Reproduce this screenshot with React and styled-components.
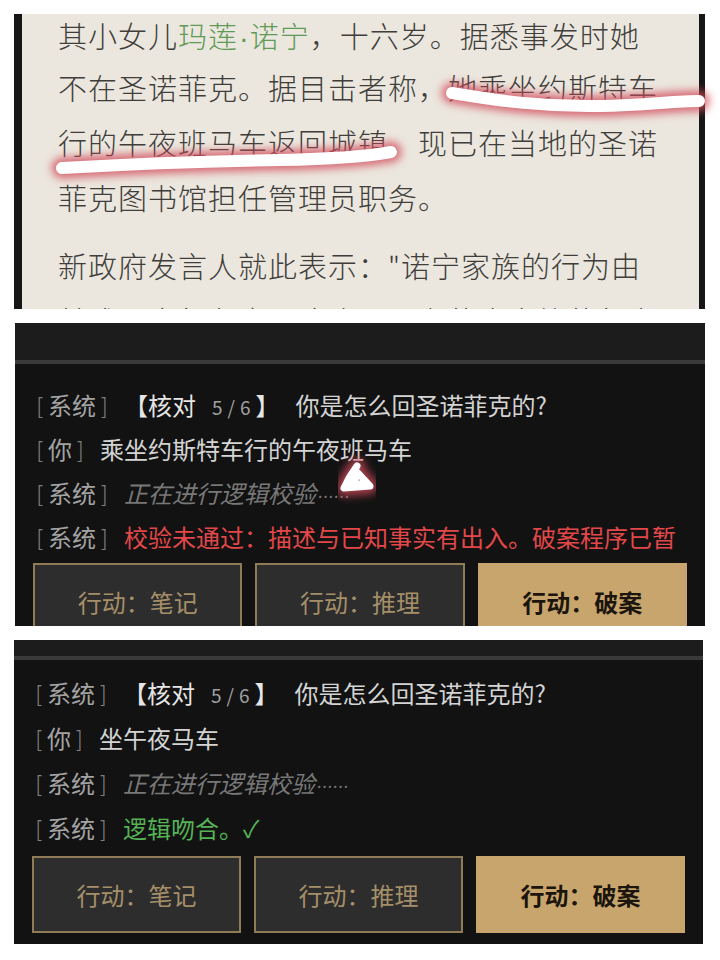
import React from 'react';
import styled, { createGlobalStyle } from 'styled-components';

const GlobalStyle = createGlobalStyle`
  html, body {
    margin: 0;
    padding: 0;
    background: #ffffff;
  }
  body {
    font-family: "Noto Sans CJK SC", "Noto Sans", sans-serif;
  }
`;

const Page = styled.div`
  position: relative;
  width: 720px;
  height: 960px;
  box-sizing: border-box;
  padding-top: 14px;
  display: flex;
  flex-direction: column;
  gap: 14px;
  overflow: hidden;
`;

// ---- reading panel ----
const Paper = styled.div`
  margin-left: 14px;
  width: 691px;
  height: 295px;
  flex-shrink: 0;
  box-sizing: border-box;
  border-left: 8px solid #161616;
  border-right: 6px solid #161616;
  background: #ebe7de;
  overflow: hidden;
`;

const Article = styled.div`
  padding-left: 36px;
  font-size: 29px;
  font-weight: 300;
  letter-spacing: 1px;
  color: #3f3e3b;
  white-space: nowrap;
`;

const Para = styled.div`
  margin-bottom: 13px;
`;

// the crop starts just above the first line
const Line = styled.div`
  height: ${p => (p.$first ? 46 : 55)}px;
  line-height: ${p => (p.$first ? 42 : 55)}px;
`;

const Name = styled.span`
  color: #5f9a56;
`;

const Dot = styled.span`
  font-family: "Liberation Sans", sans-serif;
  letter-spacing: 0;
  margin: 0 1px;
`;

// ---- console panels ----
const Console = styled.div`
  margin-left: ${p => p.$left}px;
  width: ${p => p.$width}px;
  height: ${p => p.$height}px;
  flex-shrink: 0;
  background: #121212;
  overflow: hidden;
  display: flex;
  flex-direction: column;
`;

const TopBar = styled.div`
  height: ${p => p.$h}px;
  flex-shrink: 0;
  background: #1c1c1c;
  border-bottom: 4px solid #3a3a3a;
`;

const Body = styled.div`
  padding: ${p => p.$top}px 18px 10px 18px;
  display: flex;
  flex-direction: column;
`;

const Log = styled.div`
  display: flex;
  flex-direction: column;
  padding-left: 3px;
  margin-bottom: ${p => p.$gap}px;
`;

const Row = styled.div`
  height: ${p => p.$h}px;
  line-height: ${p => p.$h}px;
  font-size: 24px;
  color: #d4d4d4;
  white-space: nowrap;
`;

const Tag = styled.span`
  color: #a3a3a3;
  margin-right: 13px;
`;

const Bracket = styled.span`
  color: #808080;
  font-family: "DejaVu Sans", sans-serif;
  font-weight: 200;
  font-size: 23px;
  margin: 0 3px;
  &:first-child {
    margin-left: 0;
  }
`;

const Check = styled.span`
  color: #e6e6e6;
`;

const Count = styled.span`
  font-size: 19px;
  color: #a0a0a0;
  letter-spacing: 5px;
  margin-left: 16px;
`;

const Question = styled.span`
  margin-left: 16px;
`;

const Pending = styled.span`
  color: #787878;
  font-style: italic;
`;

const Dots = styled.span`
  font-size: 16px;
`;

const Fail = styled.span`
  color: #e2484a;
`;

const Pass = styled.span`
  color: #55b255;
`;

const Actions = styled.div`
  display: grid;
  grid-template-columns: repeat(3, 1fr);
  gap: 13px;
`;

const Btn = styled.div`
  height: 77px;
  box-sizing: border-box;
  display: flex;
  align-items: center;
  justify-content: center;
  font-size: 24px;
  background: ${p => (p.$primary ? '#c8a56c' : '#2d2d2d')};
  border: 2px solid ${p => (p.$primary ? '#c8a56c' : '#8f7b55')};
  color: ${p => (p.$primary ? '#1b150d' : '#a58f69')};
  font-weight: ${p => (p.$primary ? 700 : 400)};
`;

// hand-drawn marks on top of the screenshots
const Marks = styled.svg`
  position: absolute;
  left: 0;
  top: 0;
  pointer-events: none;
`;

const Label = ({ children }) => (
  <Tag>
    <Bracket>[</Bracket>
    {children}
    <Bracket>]</Bracket>
  </Tag>
);

const ActionBar = () => (
  <Actions>
    <Btn>行动：笔记</Btn>
    <Btn>行动：推理</Btn>
    <Btn $primary>行动：破案</Btn>
  </Actions>
);

const CheckRow = ({ h }) => (
  <Row $h={h}>
    <Label>系统</Label>
    <Check>【核对<Count>5/6</Count>】</Check>
    <Question>你是怎么回圣诺菲克的?</Question>
  </Row>
);

const strokes = [
  { d: 'M452,93 C500,101 545,107 600,106 C645,105 675,101 699,101', w: 12 },
  { d: 'M62,168 C130,164 210,161 280,160 C330,159 370,156 391,152', w: 12 },
  { d: 'M357,466 L349,478 L344,488 L370,486 L358,473 L353,484 L362,484', w: 7 },
];

const App = () => {
  return (
    <>
      <GlobalStyle />
      <Page>
        <Paper>
          <Article>
            <Para>
              <Line $first>
                其小女儿<Name>玛莲<Dot>·</Dot>诺宁</Name>，十六岁。据悉事发时她
              </Line>
              <Line>不在圣诺菲克。据目击者称，她乘坐约斯特车</Line>
              <Line>行的午夜班马车返回城镇，现已在当地的圣诺</Line>
              <Line>菲克图书馆担任管理员职务。</Line>
            </Para>
            <Para>
              <Line>新政府发言人就此表示："诺宁家族的行为由</Line>
              <Line>其成员自行负责，这也与旧有的大家族的行为</Line>
            </Para>
          </Article>
        </Paper>

        <Console $left={15} $width={690} $height={303}>
          <TopBar $h={37} />
          <Body $top={19}>
            <Log $gap={4}>
              <CheckRow h={44} />
              <Row $h={44}>
                <Label>你</Label>乘坐约斯特车行的午夜班马车
              </Row>
              <Row $h={44}>
                <Label>系统</Label>
                <Pending>
                  正在进行逻辑校验<Dots>……</Dots>
                </Pending>
              </Row>
              <Row $h={44}>
                <Label>系统</Label>
                <Fail>校验未通过：描述与已知事实有出入。破案程序已暂</Fail>
              </Row>
            </Log>
            <ActionBar />
          </Body>
        </Console>

        <Console $left={14} $width={689} $height={304}>
          <TopBar $h={16} />
          <Body $top={10}>
            <Log $gap={6}>
              <CheckRow h={45} />
              <Row $h={45}>
                <Label>你</Label>坐午夜马车
              </Row>
              <Row $h={45}>
                <Label>系统</Label>
                <Pending>
                  正在进行逻辑校验<Dots>……</Dots>
                </Pending>
              </Row>
              <Row $h={45}>
                <Label>系统</Label>
                <Pass>逻辑吻合。✓</Pass>
              </Row>
            </Log>
            <ActionBar />
          </Body>
        </Console>

        <Marks width="720" height="960" viewBox="0 0 720 960">
          <defs>
            <filter id="glow" x="-20%" y="-200%" width="140%" height="500%">
              <feGaussianBlur stdDeviation="4.5" />
            </filter>
          </defs>
          {strokes.map((s, i) => (
            <g key={i} fill="none" strokeLinecap="round" strokeLinejoin="round">
              <path d={s.d} stroke="#d24a5a" strokeOpacity="0.8" strokeWidth={s.w + 9} filter="url(#glow)" />
              <path d={s.d} stroke="#ffffff" strokeWidth={s.w} />
            </g>
          ))}
        </Marks>
      </Page>
    </>
  );
};

export default App;
